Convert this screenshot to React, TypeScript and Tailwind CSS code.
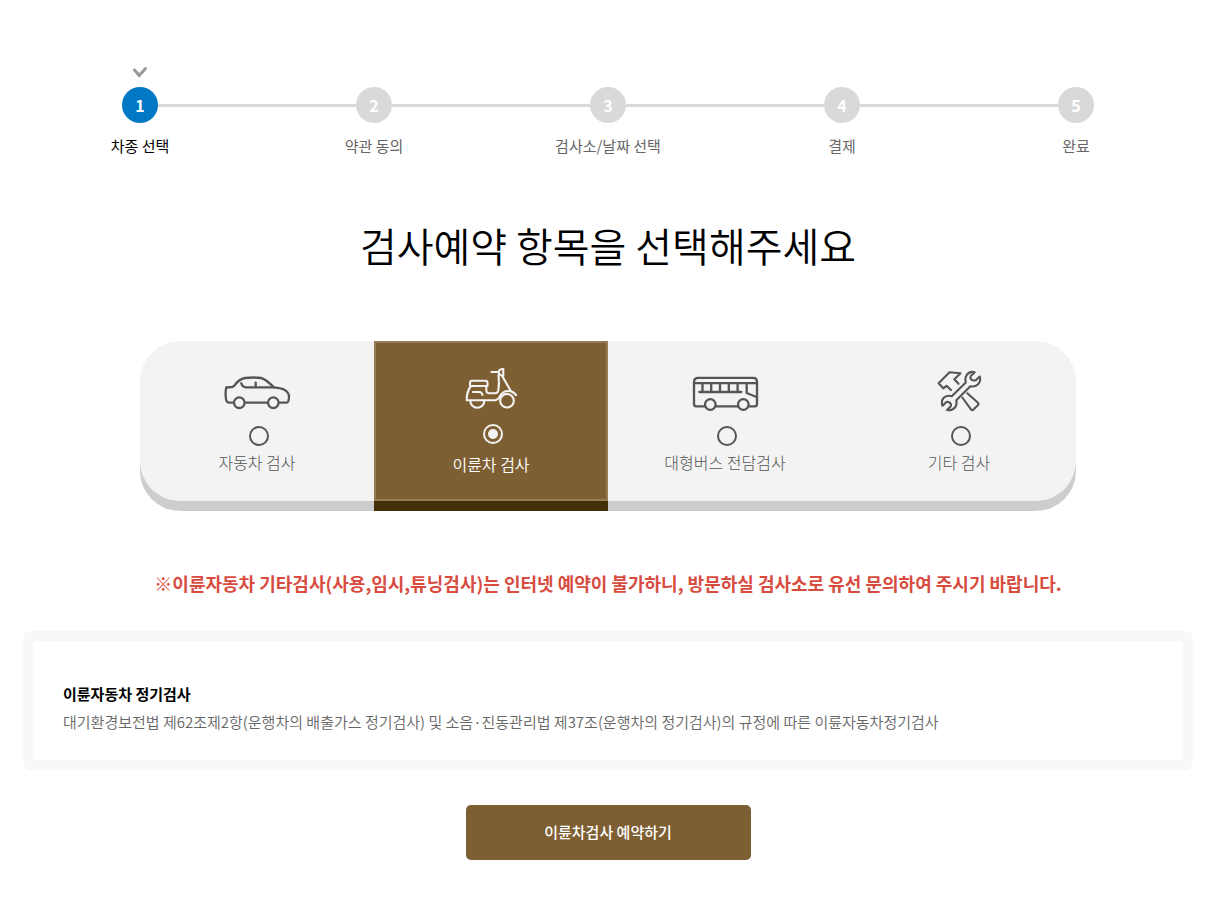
import { useState } from 'react'
import type { ReactNode } from 'react'

const steps = ['차종 선택', '약관 동의', '검사소/날짜 선택', '결제', '완료']

function CarIcon() {
  return (
    <svg width="68" height="46" viewBox="0 0 68 46" fill="none" stroke="currentColor" strokeWidth="2.3" strokeLinecap="round" strokeLinejoin="round" aria-hidden="true">
      <path d="M10.5 35.7H6.5Q4 35.7 3.2 33Q2 27 3.2 20.5L9 20Q10.5 19.8 11.5 18.5Q16 12 22 11Q30 10 38 11Q42 11.8 51 20.3Q58 21 61 22.5Q65.5 25 66 29Q66 35.7 63.5 35.7H56.3" />
      <path d="M22.3 35.7H44.3" />
      <path d="M18.3 16.3Q19.5 20.3 23.5 20.3H51M32.7 15.7V20" />
      <circle cx="16.3" cy="35.7" r="5.3" />
      <circle cx="50.3" cy="35.7" r="5.3" />
    </svg>
  )
}

function ScooterIcon() {
  return (
    <svg width="68" height="44" viewBox="0 0 68 44" fill="none" stroke="currentColor" strokeWidth="2.1" strokeLinecap="round" strokeLinejoin="round" aria-hidden="true">
      <path d="M15 13.7H28.5Q30.5 13.7 30.5 16V19H13V16Q13 13.7 15 13.7Z" />
      <path d="M14 19Q9.7 24 9.7 33.2H38.5Q42 32 43 29Q46 23.5 52 24Q57 24.5 59 28" />
      <path d="M29.3 19V23.5Q29.5 26.3 32 26.3H38Q40.5 26.3 41.3 23.5Q42.5 17 41.5 8" />
      <path d="M45.5 9.5L53.5 23.5L59 28" />
      <path d="M34.3 5H41.5Q42 2 46.3 2V9Q42.5 8.7 41.5 5" />
      <path d="M16 25H22.5Q24.8 25 25.5 28" />
      <path d="M13.3 33.7A7 7 0 0 0 27.3 33.7" />
      <circle cx="50" cy="33.7" r="6.8" />
    </svg>
  )
}

function BusIcon() {
  return (
    <svg width="68" height="46" viewBox="0 0 68 46" fill="none" stroke="currentColor" strokeWidth="2.3" strokeLinecap="round" strokeLinejoin="round" aria-hidden="true">
      <path d="M13.7 39.3H5Q3 39.3 3 37V15Q3 10.8 7.5 10.8H62Q66 10.8 66 15V37Q66 39.3 64 39.3H58" />
      <path d="M25 39.3H46.7M3.5 16.2H66" />
      <path d="M11.5 16.2V25M20.2 16.2V25M29 16.2V25M37.8 16.2V25M46.6 16.2V25M8.3 25H50.3" />
      <path d="M55.7 16.2V26L65.5 30" />
      <circle cx="19.3" cy="37.5" r="5.3" />
      <circle cx="52.3" cy="37.5" r="5.3" />
    </svg>
  )
}

function ToolsIcon() {
  return (
    <svg width="68" height="46" viewBox="0 0 68 46" fill="none" stroke="currentColor" strokeWidth="2.1" strokeLinecap="round" strokeLinejoin="round" aria-hidden="true">
      <path d="M26 23L21.5 18.8L18.3 21.3L13.6 16.3L24.5 5.2L35.5 6.2L29.3 12.3L33.5 16.8" />
      <path d="M37.3 30.5L46 42.3Q47 43.8 48.5 42.5L53.3 37.8Q54 36.8 53 35.8L42.3 26.3" />
      <path d="M49.7 5.3Q45 3.8 41.8 7.8Q39.5 11 40.8 15.5L26.8 29.2Q21.5 27.8 18.5 31Q15.8 34.3 17.5 38.8L21.5 35Q24.5 34.2 26 37.3L25.8 39.3L22 43Q27 44 30 40.5Q32.3 37.5 31.3 33.3L45.3 19.3Q50 20.3 53 17.3Q56.3 13.5 54.7 9.5L50.8 13.3Q48 14 46 12.2Q45 10.5 45.8 9Z" />
    </svg>
  )
}

interface VehicleType {
  id: string
  label: string
  icon: ReactNode
}

const vehicleTypes: VehicleType[] = [
  { id: 'car', label: '자동차 검사', icon: <CarIcon /> },
  { id: 'bike', label: '이륜차 검사', icon: <ScooterIcon /> },
  { id: 'bus', label: '대형버스 전담검사', icon: <BusIcon /> },
  { id: 'etc', label: '기타 검사', icon: <ToolsIcon /> },
]

function StepBar({ current }: { current: number }) {
  return (
    <ol className="flex">
      {steps.map((step, i) => (
        <li key={step} className="flex-1 flex flex-col items-center">
          <div className="h-6">
            {i === current && (
              <svg width="16" height="16" viewBox="0 0 16 16" fill="none" stroke="#999" strokeWidth="3" className="mt-px" aria-hidden="true">
                <path d="M2.5 6L7.2 11.5L13.5 4.5" strokeLinecap="round" />
              </svg>
            )}
          </div>
          <div className="w-full flex items-center">
            <span className={`flex-1 h-[3px] ${i > 0 ? 'bg-[#d9d9d9]' : ''}`} />
            <span
              className={`w-9 h-9 rounded-full flex items-center justify-center text-base font-bold text-white ${
                i === current ? 'bg-[#0078c4]' : 'bg-[#d9d9d9]'
              }`}
            >
              {i + 1}
            </span>
            <span className={`flex-1 h-[3px] ${i < steps.length - 1 ? 'bg-[#d9d9d9]' : ''}`} />
          </div>
          <span className={`mt-3 text-[15px] leading-[22px] ${i === current ? 'text-black' : 'text-[#666]'}`}>
            {step}
          </span>
        </li>
      ))}
    </ol>
  )
}

export default function App() {
  const [selected, setSelected] = useState('bike')

  return (
    <main className="pt-[63px] pb-12 pl-[23px] pr-[17px] bg-white font-['Noto_Sans_CJK_KR',sans-serif]">
      <StepBar current={0} />

      <h1 className="mt-[58px] text-center text-[40px] leading-[60px] font-[350] text-black">
        검사예약 항목을 선택해주세요
      </h1>

      {/* Vehicle type */}
      <div
        role="radiogroup"
        aria-label="검사예약 항목"
        className="w-4/5 h-40 mx-auto mt-[66px] flex rounded-[40px] bg-[#f3f3f3] shadow-[0_10px_0_#cdcdcd]"
      >
        {vehicleTypes.map(v => {
          const active = v.id === selected
          return (
            <label
              key={v.id}
              className={`flex-1 flex flex-col items-center border-2 pt-6 cursor-pointer ${
                active
                  ? 'bg-[#7e5f33] border-[#967c55] text-[#f3f3f3] shadow-[0_10px_0_#432f05]'
                  : 'border-transparent text-[#555]'
              }`}
            >
              {v.icon}
              <input
                type="radio"
                name="vehicle"
                value={v.id}
                checked={active}
                onChange={() => setSelected(v.id)}
                className="appearance-none shrink-0 w-5 h-5 mt-[13px] ml-[3px] rounded-full border-2 border-current checked:bg-current checked:bg-clip-content checked:p-[3px]"
              />
              <span className={`text-base leading-6 ${active ? 'mt-2 font-[350] text-white' : 'mt-1 font-light text-[#555]'}`}>
                {v.label}
              </span>
            </label>
          )
        })}
      </div>

      <p className="mt-[69px] text-center text-lg leading-[27px] font-bold text-[#d84c3f]">
        ※이륜자동차 기타검사(사용,임시,튜닝검사)는 인터넷 예약이 불가하니, 방문하실 검사소로 유선 문의하여 주시기 바랍니다.
      </p>

      <section className="mt-[34px] border-10 border-[#f8f8f8] rounded-lg pt-[39px] pb-6 px-[30px] text-[15px] leading-7">
        <h2 className="font-bold text-black">이륜자동차 정기검사</h2>
        <p className="font-[350] text-[#666]">
          대기환경보전법 제62조제2항(운행차의 배출가스 정기검사) 및 소음·진동관리법 제37조(운행차의 정기검사)의 규정에 따른 이륜자동차정기검사
        </p>
      </section>

      <div className="mt-[35px] flex justify-center">
        <button type="button" className="w-[285px] h-[55px] rounded-[5px] bg-[#7e5f33] text-[15px] font-medium text-white cursor-pointer">
          이륜차검사 예약하기
        </button>
      </div>
    </main>
  )
}
